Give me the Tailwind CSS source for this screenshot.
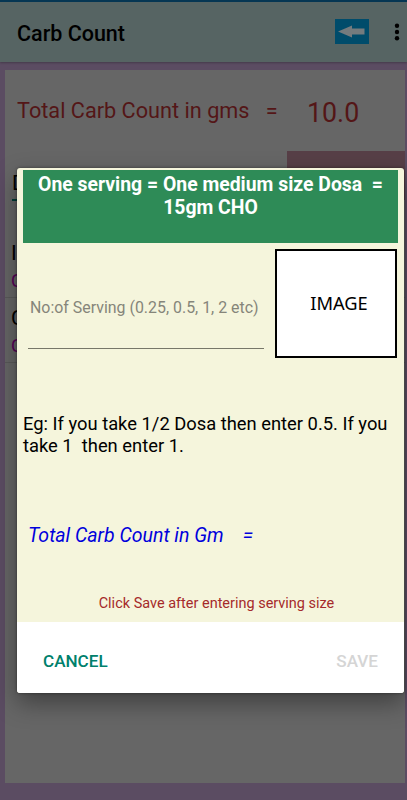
<!DOCTYPE html>
<html lang="en">
<head>
<meta charset="utf-8">
<title>Carb Count</title>
<script src="https://cdn.jsdelivr.net/npm/@tailwindcss/browser@4"></script>
</head>
<body class="relative h-[800px] w-[407px] overflow-hidden bg-[#5b4c62] font-['Roboto',sans-serif] text-black">
<div class="flex h-full flex-col">
  <header class="flex h-[62px] shrink-0 items-center border-t-2 border-[#053653] bg-[#566463] pl-[17px] shadow-[0_1px_2px_rgba(0,0,0,0.25)]">
    <h1 class="grow whitespace-nowrap pt-[3px] text-[21.500px] font-medium leading-6">Carb Count</h1>
    <svg class="mr-[24px] h-[25px] w-[34px] -mt-px" viewBox="0 0 34 25"><path fill="#004c6b" d="M0 0h34v25H0z"/><path fill="#747b7e" d="M3 12.500 17 6.500v3h12.500v6H17v3z"/></svg>
    <svg class="h-[20px] w-[14px] -mt-px -ml-px mr-px" viewBox="0 0 14 20"><circle cx="5" cy="3.700" r="2.200"/><circle cx="5" cy="10" r="2.200"/><circle cx="5" cy="16.300" r="2.200"/></svg>
  </header>
  <main class="mb-[17px] ml-[5px] mr-[2px] mt-[8px] flex grow flex-col bg-[#666]">
    <div class="flex h-[81px] items-center pl-[12px] text-[#541617]">
      <span class="w-[290px] whitespace-pre pt-[2px] text-[21.700px]">Total Carb Count in gms   =</span>
      <span class="pt-[4px] text-[26.800px] leading-8">10.0</span>
    </div>
    <div class="flex h-[49px] justify-between">
      <div class="ml-[7px] mt-[18px] h-[32px] w-[200px] border-b-2 border-[#003c36] text-[21px] leading-[28px]">D</div>
      <div class="w-[118px] bg-[#573f47]"></div>
    </div>
    <div class="mt-[28px] h-[70px] border-b border-[#595959] pl-[6px]">
      <div class="pt-[12px] text-[21px] leading-[26px]">I</div>
      <div class="text-[18px] leading-[30px] text-[#570057]">C</div>
    </div>
    <div class="h-[65px] border-b border-[#595959] pl-[6px]">
      <div class="pt-[7px] text-[21px] leading-[26px]">C</div>
      <div class="text-[18px] leading-[30px] text-[#570057]">C</div>
    </div>
  </main>
</div>
<section role="dialog" class="absolute left-[17px] top-[168px] flex h-[525px] w-[387px] flex-col overflow-hidden rounded-[3px] bg-[#f5f5dc] shadow-[0_10px_24px_rgba(0,0,0,0.38),0_0_3px_rgba(0,0,0,0.45)]">
  <h2 class="mx-[6px] mt-[2px] h-[73px] shrink-0 whitespace-pre bg-[#2e8b57] pt-[3px] text-center text-[19.400px] font-bold leading-[23px] text-white">One serving = One medium size Dosa  =
15gm CHO</h2>
  <div class="flex h-[121px] shrink-0 items-start pl-[11px] pr-[7px] pt-[6px]">
    <div class="mr-[11px] h-[100px] w-[236px] whitespace-nowrap border-b border-[#777769] pl-[2px] pt-[47px] text-[15.920px] leading-6 text-[#85857a]">No:of Serving (0.25, 0.5, 1, 2 etc)</div>
    <div class="flex h-[109px] w-[122px] items-center justify-center border-2 border-black bg-white pb-[2px] pl-[6px] font-['Noto_Sans'] text-[18.300px]">IMAGE</div>
  </div>
  <p class="mt-[49px] h-[44px] shrink-0 whitespace-pre pl-[6px] text-[18.350px] leading-[22px]">Eg: If you take 1/2 Dosa then enter 0.5. If you
take 1  then enter 1.</p>
  <p class="mt-[67px] h-[24px] shrink-0 whitespace-pre pl-[11px] text-[19.500px] italic leading-6 text-[#0000dc]">Total Carb Count in Gm    =</p>
  <p class="mt-[46px] grow whitespace-nowrap pl-[12px] text-center text-[14.480px] leading-5 text-[#a52a2a]">Click Save after entering serving size</p>
  <footer class="flex h-[71px] shrink-0 items-center justify-between bg-white pl-[26px] pr-[26px] pt-[8px] text-[17.100px] font-medium">
    <button class="text-[#00806c]">CANCEL</button>
    <button class="text-[#d5d5d5]">SAVE</button>
  </footer>
</section>
</body>
</html>
